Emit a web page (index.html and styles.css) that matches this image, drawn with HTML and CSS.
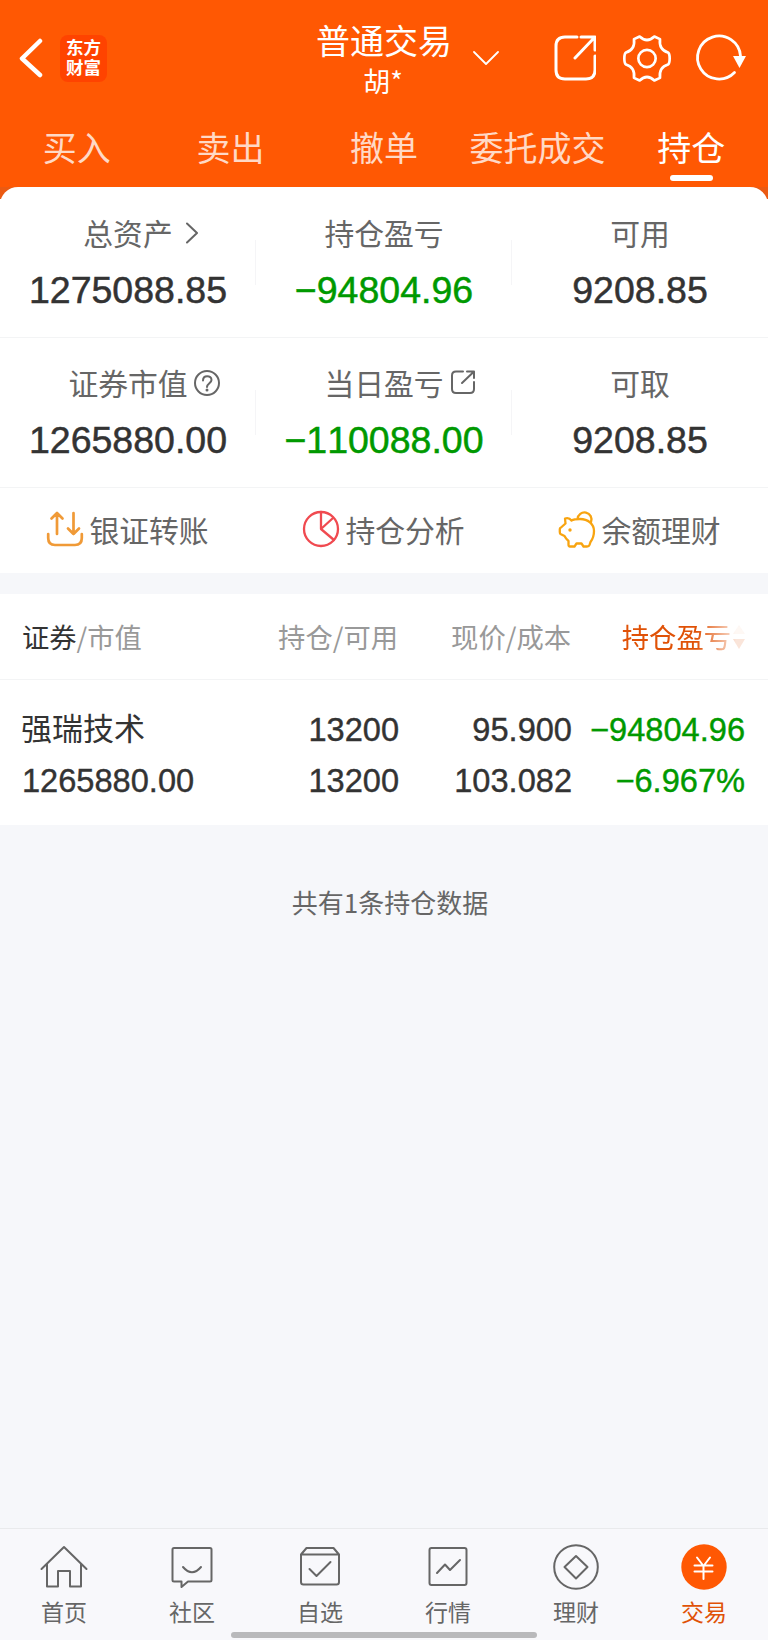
FILE: index.html
```html
<!DOCTYPE html>
<html lang="zh-CN">

<head>
    <meta charset="utf-8">
    <title>普通交易</title>
    <meta name="viewport" content="width=device-width, initial-scale=1">
    <link rel="stylesheet" href="styles.css">
</head>

<body>
    <header class="header">
        <div class="title-bar">
            <div class="title-left">
                <svg class="icon-back" viewBox="0 0 24 40"><path d="M21 3 3 20.500 21 37" /></svg>
                <div class="logo">东方<br>财富</div>
            </div>
            <div class="title">
                <div class="title-name">普通交易</div>
                <div class="title-user">胡*</div>
                <svg class="icon-down" viewBox="0 0 26 15"><path d="M1 1 13 13 25 1" /></svg>
            </div>
            <div class="title-right">
                <svg class="icon-share" viewBox="0 0 42 46"><path d="M23 2H11Q2 2 2 11V35Q2 44 11 44H32Q41 44 41 35V21M27 2H41V15M40 3 21 23" /></svg>
                <svg class="icon-gear" viewBox="715 100 150 146">
                    <path d="M768 107Q790 128 812 107L829 115C826 140 836 150 853 155Q858 158 858 173Q858 188 853 191C836 196 826 206 829 231L812 239Q790 218 768 239L751 231C754 206 744 196 727 191Q722 188 722 173Q722 158 727 155C744 150 754 140 751 115Z" />
                    <circle cx="790" cy="173" r="26" />
                </svg>
                <svg class="icon-refresh" viewBox="0 0 52 48"><path d="M38.500 38.500A21.500 21.500 0 1 1 44.500 22" /><path class="fill" d="M37 22H50L43.500 34Z" /></svg>
            </div>
        </div>
        <nav class="tabs">
            <a class="tab">买入</a>
            <a class="tab">卖出</a>
            <a class="tab">撤单</a>
            <a class="tab">委托成交</a>
            <a class="tab active">持仓</a>
        </nav>
    </header>

    <main>
        <div class="panel-wrap">
            <section class="assets">
                <div class="asset-row">
                    <div class="asset">
                        <div class="asset-label">总资产<svg class="icon-right" viewBox="0 0 12 22"><path d="M1 1.500 11 11 1 20.500" /></svg></div>
                        <div class="asset-value">1275088.85</div>
                    </div>
                    <div class="asset">
                        <div class="asset-label">持仓盈亏</div>
                        <div class="asset-value down">−94804.96</div>
                    </div>
                    <div class="asset">
                        <div class="asset-label">可用</div>
                        <div class="asset-value">9208.85</div>
                    </div>
                </div>
                <div class="asset-row">
                    <div class="asset">
                        <div class="asset-label">证券市值<svg class="icon-help" viewBox="0 0 26 26"><circle cx="13" cy="13" r="12" /><path d="M9 10.500C9 4.500 17.500 5 17.500 10 17.500 13 13 13.500 13 17" /><circle class="dot" cx="13" cy="20" r="1.500" /></svg></div>
                        <div class="asset-value">1265880.00</div>
                    </div>
                    <div class="asset">
                        <div class="asset-label">当日盈亏<svg class="icon-open" viewBox="0 0 24 24"><path d="M12 1.500H5Q1 1.500 1 5.500V19Q1 23 5 23H19Q23 23 23 19V12M16 1.500H23V8M22.500 2 11 13" /></svg></div>
                        <div class="asset-value down">−110088.00</div>
                    </div>
                    <div class="asset">
                        <div class="asset-label">可取</div>
                        <div class="asset-value">9208.85</div>
                    </div>
                </div>
            </section>
        </div>

        <section class="links">
            <a class="link">
                <svg class="icon-transfer" viewBox="0 0 36 36"><path d="M1.200 23V27Q1.200 34 8 34H28Q34.800 34 34.800 27V23M10 23V2M4.500 7.500 10 2 15.500 7.500M26.500 2V23M21 17.500 26.500 23 32 17.500" /></svg>
                银证转账
            </a>
            <a class="link">
                <svg class="icon-pie" viewBox="0 0 36 36"><circle cx="18" cy="18" r="17" /><path d="M18 1V18L31 29M18 18 30 7" /></svg>
                持仓分析
            </a>
            <a class="link">
                <svg class="icon-pig" viewBox="0 0 36 36">
                    <path d="M18.500 8A7 7 0 1 1 32 11M6 7.500C9 6.500 11 7.500 12.500 9.500 15 8 17 8 21 8 29 8 35 13 35 20 35 26 33 29 31.500 31L30.500 34Q30 35.500 28 35.500H24.500L22.500 32.500H17.500L15.500 35.500H11Q9.500 35.500 9.500 33.500V30Q7 28 5.500 25L1.500 23Q.8 22.500 .8 21V18Q.8 17 2 16.500L6.500 12.500Z" />
                    <circle class="eye" cx="11" cy="19" r="1.700" />
                </svg>
                余额理财
            </a>
        </section>

        <section class="holdings">
            <div class="holdings-head">
                <div><b>证券</b>/市值</div>
                <div>持仓/可用</div>
                <div>现价/成本</div>
                <div class="sort">持仓盈亏<svg class="icon-sort" viewBox="0 0 12 24"><path d="M0 9 6 0 12 9Z" opacity=".3" /><path d="M0 14H12L6 24Z" /></svg></div>
            </div>
            <div class="holding">
                <div class="stock-name">强瑞技术</div>
                <div>13200</div>
                <div>95.900</div>
                <div class="down">−94804.96</div>
                <div>1265880.00</div>
                <div>13200</div>
                <div>103.082</div>
                <div class="down">−6.967%</div>
            </div>
        </section>

        <p class="total">共有1条持仓数据</p>
    </main>

    <footer class="tabbar">
        <a class="tabbar-item">
            <svg viewBox="0 0 48 48"><path d="M1.500 26 24 4 46.500 26M7 21V43.500H18V28H30V43.500H41V21" /></svg>
            首页
        </a>
        <a class="tabbar-item">
            <svg viewBox="0 0 48 48"><path d="M6 5H42Q43.500 5 43.500 6.500V37Q43.500 38.500 42 38.500H20L13.500 44V38.500H6Q4.500 38.500 4.500 37V6.500Q4.500 5 6 5ZM15 24Q24 34.500 33 24" /></svg>
            社区
        </a>
        <a class="tabbar-item">
            <svg viewBox="0 0 48 48"><path d="M5 11.500 10.500 5H37.500L43 11.500V39Q43 41.500 40.500 41.500H7.500Q5 41.500 5 39ZM5 11.500H43M13.500 26 20.500 33 34.500 19" /></svg>
            自选
        </a>
        <a class="tabbar-item">
            <svg viewBox="0 0 48 48"><rect x="5.500" y="5" width="37" height="37" rx="2" /><path d="M13 30 21 21.500 26 27 36 17" /></svg>
            行情
        </a>
        <a class="tabbar-item">
            <svg viewBox="0 0 48 48"><circle cx="24" cy="24" r="21.800" /><path d="M24 13 35.500 24 24 35.500 12.500 24Z" /></svg>
            理财
        </a>
        <a class="tabbar-item active">
            <svg viewBox="0 0 48 48"><circle class="disc" cx="24" cy="24" r="22.700" /><path d="M17 14.500 23.500 23 30 14.500M14.500 22.500H32.500M14.500 28.500H32.500M23.500 23V36" /></svg>
            交易
        </a>
        <div class="home-bar"></div>
    </footer>
</body>

</html>
```
FILE: styles.css
```css
* {
    box-sizing: border-box;
}

body {
    margin: 0;
    min-height: 1640px;
    display: flex;
    flex-direction: column;
    background: #f6f7fa;
    color: #666;
    font-family: "Noto Sans CJK SC", sans-serif;
}

svg {
    display: block;
    flex: none;
    fill: none;
    stroke: currentColor;
    stroke-width: 2;
    stroke-linecap: round;
    stroke-linejoin: round;
}

/* header */
.header {
    height: 187px;
    background: #ff5803;
    color: #fff;
}

.title-bar {
    height: 115px;
    display: grid;
    grid-template-columns: 1fr auto 1fr;
}

.title-left {
    display: flex;
    align-items: center;
    gap: 17px;
    padding: 1px 0 0 19px;
}

.icon-back {
    width: 24px;
    height: 40px;
    stroke-width: 4.5;
}

.logo {
    width: 47px;
    height: 47px;
    padding-top: 2px;
    border-radius: 8px;
    background: #ff4300;
    font-size: 17.5px;
    font-weight: bold;
    line-height: 20px;
    text-align: center;
}

.title {
    position: relative;
    padding-top: 20px;
    text-align: center;
}

.title-name {
    font-size: 34px;
    line-height: 40px;
}

.title-user {
    margin-left: -2px;
    font-size: 27px;
    line-height: 42px;
}

.icon-down {
    position: absolute;
    left: 100%;
    top: 51px;
    width: 26px;
    height: 15px;
    margin-left: 21px;
    stroke-width: 1.8;
}

.title-right {
    display: flex;
    justify-content: flex-end;
    align-items: center;
    padding: 1px 18px 0 0;
}

.icon-share {
    width: 42px;
    height: 46px;
    margin-right: 26px;
    stroke-width: 3;
}

.icon-gear {
    width: 50px;
    height: 49px;
    margin-right: 24px;
    stroke-width: 8;
}

.icon-refresh {
    width: 52px;
    height: 48px;
    margin-right: 2px;
    overflow: visible;
    stroke-width: 2.8;
}

.fill {
    fill: #fff;
    stroke: none;
}

.tabs {
    display: grid;
    grid-template-columns: repeat(5, 1fr);
}

.tab {
    height: 72px;
    display: flex;
    flex-direction: column;
    align-items: center;
    color: #ffd9c6;
    font-size: 34px;
    line-height: 64px;
    white-space: nowrap;
}

.tab.active {
    color: #fff;
}

.tab.active::after {
    content: "";
    width: 43px;
    height: 6px;
    margin-top: -4px;
    border-radius: 3px;
    background: #fff;
}

/* assets */
.panel-wrap {
    background: linear-gradient(#eb5a12 12px, #fff 12px);
}

.assets {
    border-radius: 18px 18px 0 0;
    background: #fff;
}

.asset-row {
    height: 151px;
    display: grid;
    grid-template-columns: repeat(3, 1fr);
    padding-top: 24px;
    border-bottom: 1px solid #f3f4f5;
}

.asset-row + .asset-row {
    height: 150px;
    padding-top: 23px;
}

.asset {
    display: flex;
    flex-direction: column;
    align-items: center;
    background: linear-gradient(#f5f5f7, #f5f5f7) right 29px / 1px 45px no-repeat;
}

.asset:last-child {
    background: none;
}

.asset-label {
    position: relative;
    font-size: 29.8px;
    line-height: 42px;
}

.asset-label svg {
    position: absolute;
    left: 100%;
}

.icon-right {
    top: 11px;
    width: 12px;
    height: 22px;
    margin-left: 13px;
}

.icon-help {
    top: 9px;
    width: 26px;
    height: 26px;
    margin-left: 6px;
}

.icon-help .dot {
    fill: currentColor;
    stroke: none;
}

.icon-open {
    top: 9px;
    width: 24px;
    height: 24px;
    margin-left: 7px;
}

.asset-value {
    margin-top: 15px;
    color: #333;
    font-family: "Liberation Sans", Arial, sans-serif;
    font-size: 37.5px;
    font-kerning: none;
    line-height: 44px;
    -webkit-text-stroke: .5px currentColor;
}

.asset-value.down,
.down {
    color: #090;
}

/* links */
.links {
    height: 85px;
    display: grid;
    grid-template-columns: repeat(3, 1fr);
    background: #fff;
}

.link {
    display: flex;
    justify-content: center;
    align-items: center;
    gap: 6px;
    padding-bottom: 3px;
    font-size: 29.8px;
}

.link svg {
    width: 36px;
    height: 36px;
    overflow: visible;
}

.icon-transfer {
    color: #f09a37;
    stroke-width: 2.7;
}

.icon-pie {
    color: #f04a50;
    stroke-width: 2.3;
}

.icon-pig {
    color: #f8a410;
    stroke-width: 2.3;
}

.icon-pig .eye {
    fill: currentColor;
    stroke: none;
}

/* holdings */
.holdings {
    margin-top: 21px;
    background: #fff;
}

.holdings-head,
.holding {
    display: grid;
    grid-template-columns: 203px repeat(3, 173px);
    padding: 0 24px 0 22px;
    text-align: right;
    white-space: nowrap;
}

.holdings-head {
    height: 86px;
    border-bottom: 1px solid #f3f4f5;
    color: #999;
    font-size: 27.3px;
    line-height: 84px;
}

.holdings-head div:first-child {
    text-align: left;
}

.holdings-head b {
    color: #333;
    font-weight: normal;
}

.holdings-head .sort {
    display: flex;
    justify-content: flex-end;
    gap: 2px;
    margin-right: -1px;
    color: #e05207;
    -webkit-mask-image: linear-gradient(to right, #000 125px, rgba(0, 0, 0, .15) 165px);
    mask-image: linear-gradient(to right, #000 125px, rgba(0, 0, 0, .15) 165px);
}

.icon-sort {
    width: 12px;
    height: 24px;
    margin-top: 31px;
    fill: currentColor;
    stroke: none;
}

.holding {
    height: 145px;
    padding-top: 24px;
    padding-right: 23px;
    grid-template-columns: 204px repeat(3, 173px);
    grid-auto-rows: 51px;
    color: #333;
    font-family: "Liberation Sans", Arial, sans-serif;
    font-size: 32.6px;
    font-kerning: none;
    line-height: 51px;
    -webkit-text-stroke: .4px currentColor;
}

.holding div:nth-child(4n + 1) {
    text-align: left;
}

.holding .stock-name {
    margin: -3px 0 0 -1px;
    font-family: "Noto Sans CJK SC", sans-serif;
    font-size: 31px;
    -webkit-text-stroke: 0;
}

.total {
    margin: 57px 0 0 12px;
    font-size: 26px;
    line-height: 40px;
    text-align: center;
}

/* bottom bar */
.tabbar {
    position: relative;
    height: 112px;
    display: grid;
    grid-template-columns: repeat(6, 1fr);
    margin-top: auto;
    padding-top: 14px;
    border-top: 1px solid #e9eaec;
    background: #f8f8fb;
}

.tabbar-item {
    display: flex;
    flex-direction: column;
    align-items: center;
    font-size: 23px;
    line-height: 40px;
}

.tabbar-item svg {
    width: 48px;
    height: 48px;
}

.tabbar-item.active {
    color: #e05207;
}

.tabbar-item.active svg {
    color: #fff;
}

.tabbar-item .disc {
    fill: #ff5803;
    stroke: none;
}

.home-bar {
    position: absolute;
    left: 231px;
    bottom: 2px;
    width: 306px;
    height: 6px;
    border-radius: 3px;
    background: #b9b9bb;
}
```
